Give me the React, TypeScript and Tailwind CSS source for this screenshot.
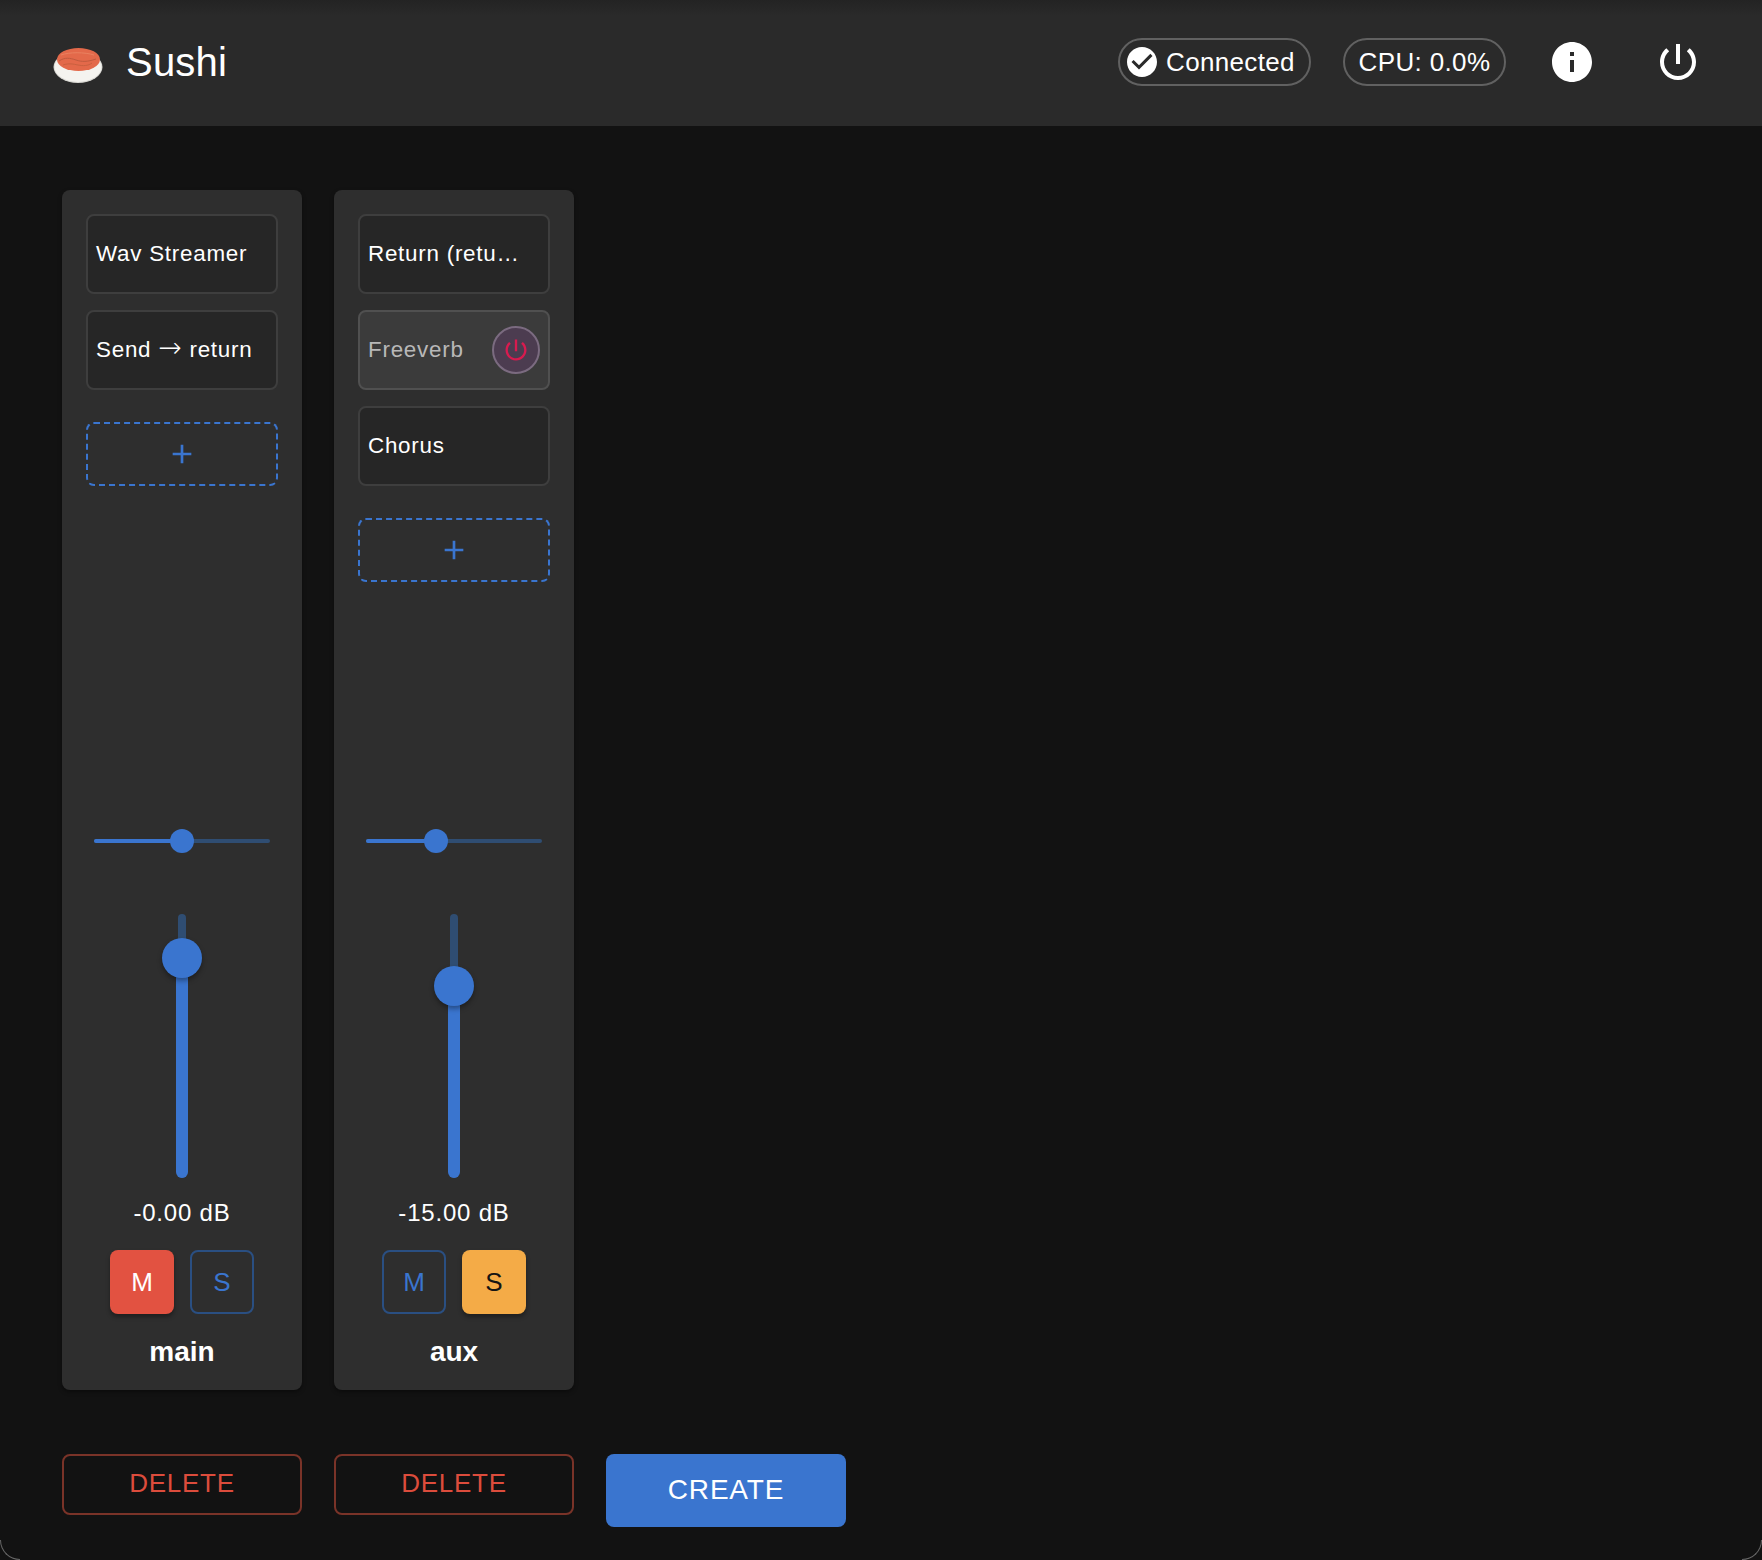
import React from "react";

const POWER =
  "M13 3h-2v10h2V3zm4.83 2.17l-1.42 1.42C17.99 7.86 19 9.81 19 12c0 3.87-3.13 7-7 7s-7-3.13-7-7c0-2.19 1.01-4.14 2.58-5.42L6.17 5.17C4.23 6.82 3 9.26 3 12c0 4.97 4.03 9 9 9s9-4.03 9-9c0-2.74-1.23-5.18-3.17-6.83z";

function Icon({ d, size, className }: { d: string; size: number; className?: string }) {
  return (
    <svg width={size} height={size} viewBox="0 0 24 24" fill="currentColor" className={className}>
      <path d={d} />
    </svg>
  );
}

function Logo() {
  return (
    <svg width="50" height="36" viewBox="0 0 50 36" className="mt-[6px] shrink-0">
      <ellipse cx="25" cy="20" rx="24.5" ry="16" fill="#d8d7d2" />
      <ellipse cx="25" cy="20" rx="23.5" ry="15" fill="#f4f3ef" />
      <ellipse cx="25.5" cy="12.5" rx="21.5" ry="11.5" fill="#e3694a" />
      <path d="M6 14c6-4 11-3 17-1s11 2 20-1" stroke="#bf5a3e" strokeWidth="1" fill="none" />
      <path d="M10 18c6-2 10-1 15 0s10 1 14-2" stroke="#c9603f" strokeWidth="1" fill="none" />
      <path d="M8 8c8-3 24-3 33 0" stroke="#ea8160" strokeWidth="1" fill="none" />
    </svg>
  );
}

function Chip({ children, className }: { children: React.ReactNode; className: string }) {
  return (
    <div className={`flex h-12 items-center rounded-full border-2 border-[#616161] text-[26px] tracking-[0.35px] text-white ${className}`}>
      {children}
    </div>
  );
}

function Header() {
  return (
    <header className="flex h-[126px] items-center justify-between bg-gradient-to-b from-[#232323] from-0% to-[#2a2a2a] to-[12%] pb-[2px] pl-[53px] pr-[60px]">
      <div className="flex items-center gap-[23px]">
        <Logo />
        <span className="text-[40px] leading-none tracking-[0.2px] text-white">Sushi</span>
      </div>
      <div className="flex items-center">
        <Chip className="w-[193px] pl-[4px]">
          <Icon
            size={36}
            className="text-white"
            d="M12 2C6.47 2 2 6.47 2 12s4.47 10 10 10 10-4.47 10-10S17.53 2 12 2zm-2 15l-5-5 1.41-1.41L10 14.17l7.59-7.59L19 8l-9 9z"
          />
          <span className="ml-[6px]">Connected</span>
        </Chip>
        <Chip className="ml-[32px] w-[163px] justify-center">CPU: 0.0%</Chip>
        <Icon
          size={48}
          className="ml-[42px] text-white"
          d="M12 2C6.48 2 2 6.48 2 12s4.48 10 10 10 10-4.48 10-10S17.52 2 12 2zm1 15h-2v-6h2v6zm0-8h-2V7h2v2z"
        />
        <Icon size={48} className="ml-[58px] text-white" d={POWER} />
      </div>
    </header>
  );
}

function Processor({ name, off }: { name: string; off?: boolean }) {
  const parts = name.split("→");
  return (
    <div
      className={`flex h-20 items-center rounded-lg border-2 pl-2 text-[22.4px] tracking-[0.75px] ${
        off ? "border-[#505050] bg-[#3b3b3b] pr-2 text-[#b8b8b8]" : "border-[#3e3e3e] bg-[#262626] pr-2 text-white"
      }`}
    >
      <span className="min-w-0 flex-1 whitespace-nowrap">
        {parts.length > 1 ? (
          <>
            {parts[0]}
            <span className="font-['DejaVu_Sans'] text-[28px] font-extralight leading-none">→</span>
            {parts[1]}
          </>
        ) : (
          name
        )}
      </span>
      {off && (
        <span className="flex h-12 w-12 shrink-0 items-center justify-center rounded-full border-2 border-[#7b6b80] bg-[#4c3c50] text-[#d81b4f]">
          <Icon size={28} d={POWER} />
        </span>
      )}
    </div>
  );
}

function Pan({ at }: { at: number }) {
  return (
    <div className="relative mx-auto h-6 w-[176px]">
      <div className="absolute inset-x-0 top-[10px] h-1 rounded-full bg-[#2f4d72]" />
      <div className="absolute left-0 top-[10px] h-1 rounded-full bg-[#3a75cf]" style={{ width: at }} />
      <div className="absolute top-0 h-6 w-6 -translate-x-1/2 rounded-full bg-[#3a75cf]" style={{ left: at }} />
    </div>
  );
}

function Fader({ at }: { at: number }) {
  return (
    <div className="relative mx-auto mt-[61px] h-[264px] w-10">
      <div className="absolute inset-y-0 left-4 w-2 rounded-full bg-[#2f4d72]" />
      <div className="absolute bottom-0 left-[14px] w-3 rounded-full bg-[#3a75cf]" style={{ height: at }} />
      <div
        className="absolute left-0 h-10 w-10 translate-y-1/2 rounded-full bg-[#3a75cf] shadow-[0_3px_5px_rgba(0,0,0,0.35)]"
        style={{ bottom: at }}
      />
    </div>
  );
}

function Toggle({ label, tone }: { label: string; tone: "red" | "orange" | "blue" }) {
  const styles = {
    red: "bg-[#e25241] text-white shadow-[0_3px_4px_rgba(0,0,0,0.35)]",
    orange: "bg-[#f4ab47] text-[#141414] shadow-[0_3px_4px_rgba(0,0,0,0.35)]",
    blue: "border-2 border-[#2a4f82] text-[#3a75cf]",
  }[tone];
  return (
    <div className={`flex h-16 w-16 items-center justify-center rounded-lg text-[26px] ${styles}`}>{label}</div>
  );
}

function Channel({
  name,
  processors,
  pan,
  fader,
  db,
  mute,
  solo,
}: {
  name: string;
  processors: { name: string; off?: boolean }[];
  pan: number;
  fader: number;
  db: string;
  mute: boolean;
  solo: boolean;
}) {
  return (
    <section className="flex h-[1200px] flex-col rounded-lg bg-[#2e2e2e] px-6 pt-6 shadow-[0_2px_4px_rgba(0,0,0,0.4)]">
      <div className="flex flex-col gap-4">
        {processors.map((p) => (
          <Processor key={p.name} {...p} />
        ))}
      </div>
      <div className="mt-8 flex h-16 items-center justify-center rounded-lg border-2 border-dashed border-[#3a75cf] text-[#3a75cf]">
        <Icon size={32} d="M19 13h-6v6h-2v-6H5v-2h6V5h2v6h6v2z" />
      </div>
      <div className="mt-auto pb-[21px]">
        <Pan at={pan} />
        <Fader at={fader} />
        <div className="mt-5 text-center text-[24px] leading-[30px] tracking-[0.8px] text-white">{db}</div>
        <div className="mt-[22px] flex justify-center gap-4">
          <Toggle label="M" tone={mute ? "red" : "blue"} />
          <Toggle label="S" tone={solo ? "orange" : "blue"} />
        </div>
        <div className="mt-[21px] text-center text-[28px] font-bold leading-[34px] text-white">{name}</div>
      </div>
    </section>
  );
}

function Delete() {
  return (
    <div className="flex h-[61px] items-center justify-center rounded-lg border-2 border-[#7a3328] pb-[3px] text-[26px] tracking-[0.74px] text-[#dc4c3c]">
      DELETE
    </div>
  );
}

export default function App() {
  return (
    <div
      className="relative h-[1560px] w-full overflow-hidden bg-[#121212]"
      style={{ fontFamily: '"Liberation Sans", Arial, sans-serif' }}
    >
      <Header />
      <main className="grid grid-cols-[240px_240px_240px] grid-rows-[1200px_auto] items-start gap-x-8 gap-y-16 pl-[62px] pt-16">
        <Channel
          name="main"
          processors={[{ name: "Wav Streamer" }, { name: "Send → return" }]}
          pan={88}
          fader={220}
          db="-0.00 dB"
          mute
          solo={false}
        />
        <Channel
          name="aux"
          processors={[{ name: "Return (retu…" }, { name: "Freeverb", off: true }, { name: "Chorus" }]}
          pan={70}
          fader={192}
          db="-15.00 dB"
          mute={false}
          solo
        />
        <div />
        <Delete />
        <Delete />
        <div className="flex h-[73px] items-center justify-center rounded-lg bg-[#3a75cf] pb-[2px] text-[28px] tracking-[0.8px] text-white">
          CREATE
        </div>
      </main>
      <div className="absolute bottom-0 left-0 h-5 w-5 rounded-bl-[20px] border-b border-l border-[#666]" />
      <div className="absolute bottom-0 right-0 h-5 w-5 rounded-br-[20px] border-b border-r border-[#666]" />
    </div>
  );
}
